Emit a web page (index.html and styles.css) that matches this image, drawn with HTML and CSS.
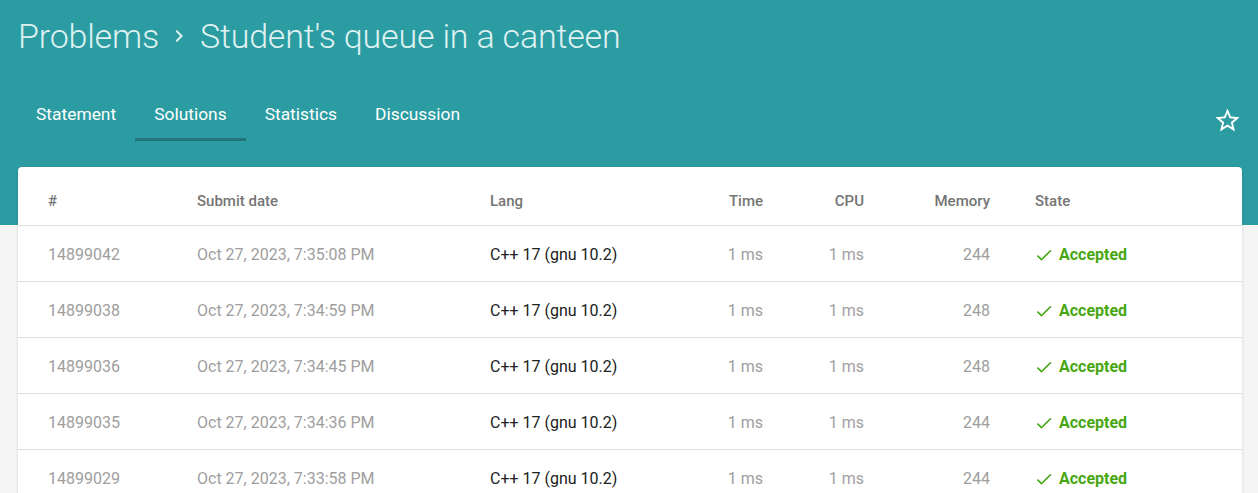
FILE: index.html
```html
<!DOCTYPE html>
<html>
<head>
<meta charset="utf-8">
<link rel="stylesheet" href="styles.css">
</head>
<body>
<header class="hero">
  <h1 class="crumbs"><span>Problems</span><svg class="chev" viewBox="0 0 24 24"><path d="M8.59 16.59L13.17 12 8.59 7.41 10 6l6 6-6 6z"/></svg><span>Student's queue in a canteen</span></h1>
  <div class="tabbar">
    <nav class="tabs">
      <a class="tab">Statement</a>
      <a class="tab active">Solutions</a>
      <a class="tab">Statistics</a>
      <a class="tab">Discussion</a>
    </nav>
    <svg class="star" viewBox="0 0 24 24"><path d="M22 9.24l-7.19-.62L12 2 9.19 8.63 2 9.24l5.46 4.73L5.82 21 12 17.27 18.18 21l-1.63-7.03L22 9.24zM12 15.4l-3.76 2.27 1-4.28-3.32-2.88 4.38-.38L12 6.1l1.71 4.04 4.38.38-3.32 2.88 1 4.28L12 15.4z"/></svg>
  </div>
</header>
<main class="card">
  <div class="row head">
    <div>#</div><div>Submit date</div><div>Lang</div><div class="r">Time</div><div class="r">CPU</div><div class="r">Memory</div><div class="st">State</div>
  </div>
  <div class="row">
    <div class="g">14899042</div><div class="g">Oct 27, 2023, 7:35:08 PM</div><div>C++ 17 (gnu 10.2)</div><div class="r g">1 ms</div><div class="r g">1 ms</div><div class="r g">244</div><div class="st ok"><svg viewBox="0 0 24 24"><path d="M9 16.17L4.83 12l-1.42 1.41L9 19 21 7l-1.41-1.41z"/></svg>Accepted</div>
  </div>
  <div class="row">
    <div class="g">14899038</div><div class="g">Oct 27, 2023, 7:34:59 PM</div><div>C++ 17 (gnu 10.2)</div><div class="r g">1 ms</div><div class="r g">1 ms</div><div class="r g">248</div><div class="st ok"><svg viewBox="0 0 24 24"><path d="M9 16.17L4.83 12l-1.42 1.41L9 19 21 7l-1.41-1.41z"/></svg>Accepted</div>
  </div>
  <div class="row">
    <div class="g">14899036</div><div class="g">Oct 27, 2023, 7:34:45 PM</div><div>C++ 17 (gnu 10.2)</div><div class="r g">1 ms</div><div class="r g">1 ms</div><div class="r g">248</div><div class="st ok"><svg viewBox="0 0 24 24"><path d="M9 16.17L4.83 12l-1.42 1.41L9 19 21 7l-1.41-1.41z"/></svg>Accepted</div>
  </div>
  <div class="row">
    <div class="g">14899035</div><div class="g">Oct 27, 2023, 7:34:36 PM</div><div>C++ 17 (gnu 10.2)</div><div class="r g">1 ms</div><div class="r g">1 ms</div><div class="r g">244</div><div class="st ok"><svg viewBox="0 0 24 24"><path d="M9 16.17L4.83 12l-1.42 1.41L9 19 21 7l-1.41-1.41z"/></svg>Accepted</div>
  </div>
  <div class="row">
    <div class="g">14899029</div><div class="g">Oct 27, 2023, 7:33:58 PM</div><div>C++ 17 (gnu 10.2)</div><div class="r g">1 ms</div><div class="r g">1 ms</div><div class="r g">244</div><div class="st ok"><svg viewBox="0 0 24 24"><path d="M9 16.17L4.83 12l-1.42 1.41L9 19 21 7l-1.41-1.41z"/></svg>Accepted</div>
  </div>
</main>
</body>
</html>
```
FILE: styles.css
```css
html, body {
  margin: 0;
  padding: 0;
}
body {
  background: #f5f5f5;
  font-family: Roboto, "Liberation Sans", sans-serif;
  overflow: hidden;
}
.hero {
  background: #2b9ca1;
  height: 225px;
  padding: 0 16px 0 18px;
  box-sizing: border-box;
}
.crumbs {
  margin: 0;
  padding-top: 13px;
  height: 45px;
  display: flex;
  align-items: center;
  font-weight: 300;
  font-size: 34px;
  color: #dff1f1;
  letter-spacing: -0.2px;
}
.chev {
  width: 24px;
  height: 24px;
  fill: #dff1f1;
  margin: 0 9px 0 8px;
}
.tabbar {
  display: flex;
  justify-content: space-between;
  align-items: center;
  margin-top: 32px;
}
.tabs {
  display: flex;
  margin-left: -1px;
}
.tab {
  color: #fff;
  font-size: 17.4px;
  padding: 0 19px;
  height: 48px;
  line-height: 48px;
  border-bottom: 3px solid transparent;
  box-sizing: content-box;
}
.tab.active {
  border-bottom-color: #22767a;
}
.star {
  width: 29px;
  height: 29px;
  fill: #fff;
  margin-top: 10px;
  margin-right: 0;
}
.card {
  background: #fff;
  margin: -58px 16px 0 18px;
  border-radius: 4px 4px 0 0;
  box-shadow: 0 1px 3px rgba(0,0,0,0.15);
  height: 340px;
}
.row {
  display: grid;
  grid-template-columns: 149px 293px 173px 100px 101px 126px 1fr;
  padding: 2px 30px 0;
  height: 53px;
  align-items: center;
  border-bottom: 1px solid #e0e0e0;
  font-size: 16px;
  color: #212121;
}
.row.head {
  height: 49px;
  padding-top: 9px;
  font-size: 15px;
  font-weight: 500;
  color: #757575;
}
.r { text-align: right; }
.st {
  padding-left: 45px;
  display: flex;
  align-items: center;
}
.g { color: #9e9e9e; }
.ok {
  color: #47a712;
  font-weight: 700;
}
.ok svg {
  width: 20px;
  height: 20px;
  fill: #47a712;
  margin: 0 5px 0 -1px;
}
```
